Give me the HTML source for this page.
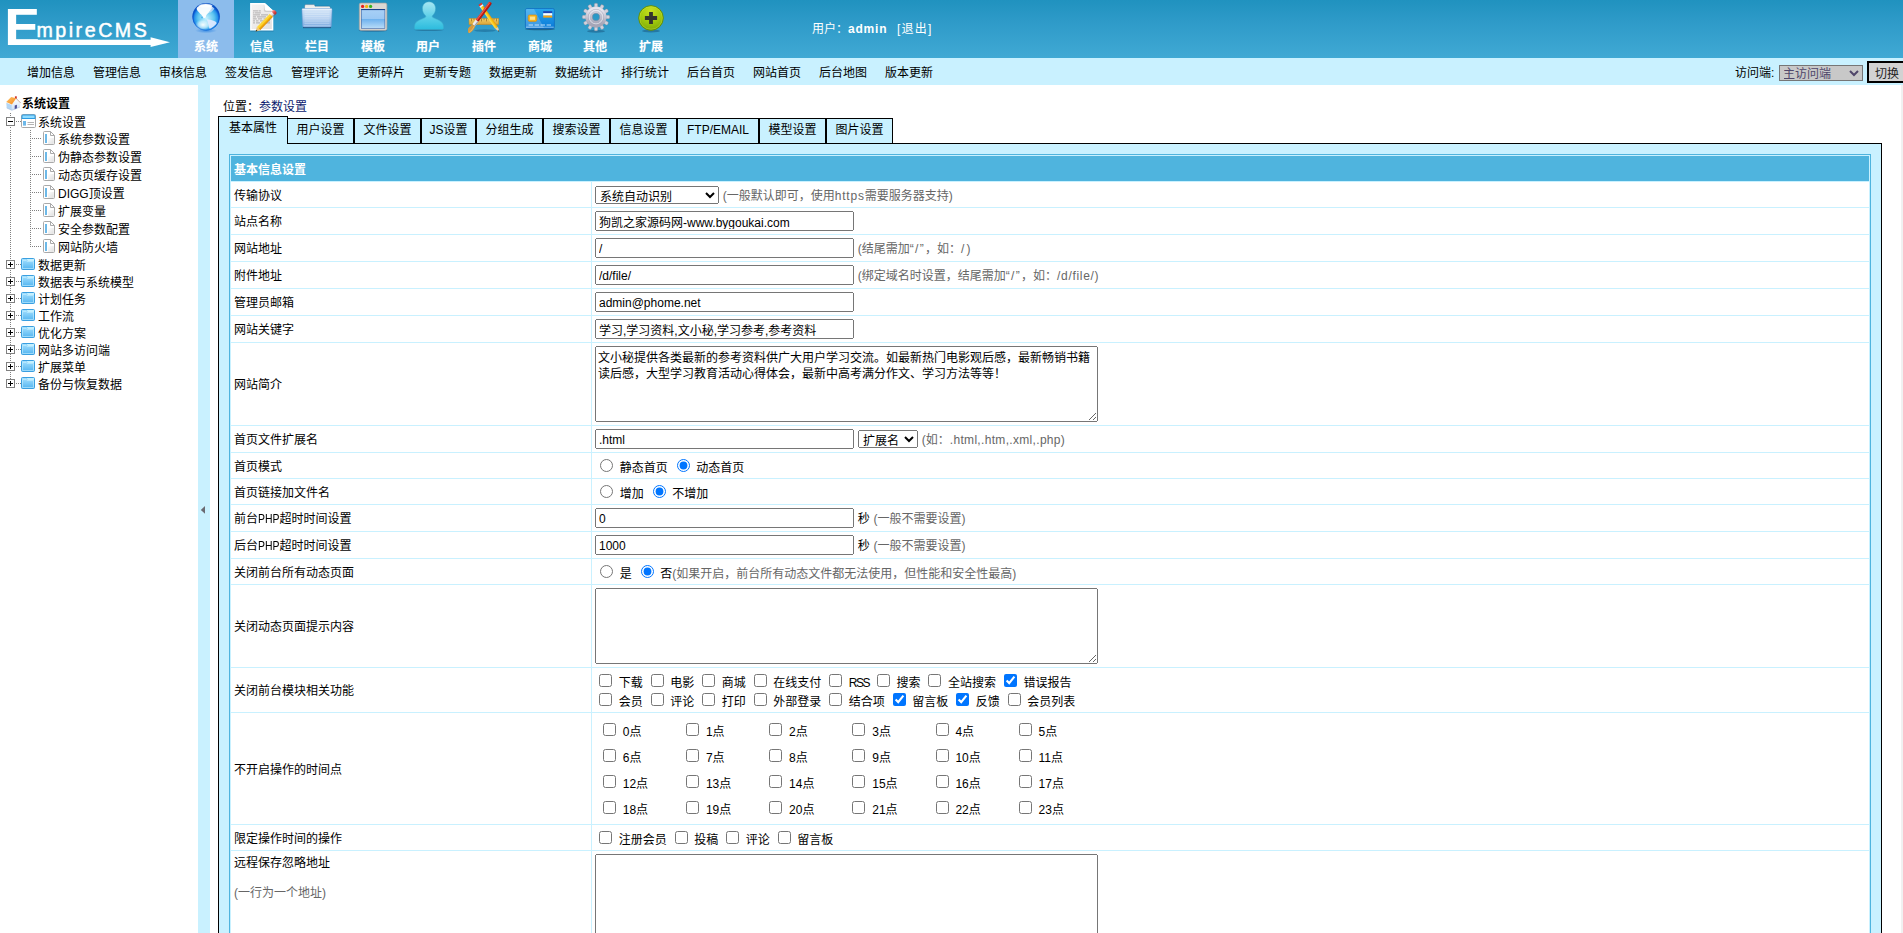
<!DOCTYPE html>
<html lang="zh-CN">
<head>
<meta charset="utf-8">
<title>EmpireCMS</title>
<style>
html,body{margin:0;padding:0;}
body{width:1903px;height:933px;overflow:hidden;position:relative;background:#fff;
  font-family:"Liberation Sans","Noto Sans CJK SC",sans-serif;font-size:12px;color:#000;line-height:15px;}
a{color:inherit;text-decoration:none;}
#top{position:absolute;left:0;top:0;width:1903px;height:58px;background:linear-gradient(#2092bf 0%,#2f9bc9 40%,#40a9d4 100%);}
#logoE{position:absolute;left:5px;top:.7px;font-family:"Liberation Sans",sans-serif;font-weight:bold;font-size:52.3px;line-height:52.3px;color:#fff;}
#logoT{position:absolute;left:36.4px;top:18.4px;font-family:"Liberation Sans",sans-serif;font-size:19.6px;line-height:24px;letter-spacing:2.55px;color:#fff;white-space:nowrap;-webkit-text-stroke:.5px #fff;}
#logoA{position:absolute;left:0;top:0;}
.nav{position:absolute;top:0;height:58px;width:56px;text-align:center;color:#fff;font-weight:bold;font-size:12px;}
.nav.on{background:#8cbcec;}
.nav svg{position:absolute;left:12px;top:1px;}
.nav span{position:absolute;left:0;width:100%;top:39px;line-height:16px;text-shadow:0 0 1px rgba(255,255,255,.35);}
#user span,#user b{position:absolute;top:21px;color:#fff;line-height:16px;white-space:nowrap;}
#sub{position:absolute;left:0;top:58px;width:1903px;height:27px;background:#c9f1ff;}
#sub a{position:absolute;top:7px;line-height:16px;white-space:nowrap;}
#left{position:absolute;left:0;top:85px;width:198px;height:848px;background:#fff;}
#split{position:absolute;left:198px;top:85px;width:12px;height:848px;background:#c9f1ff;}
#main{position:absolute;left:210px;top:85px;width:1693px;height:848px;background:#fff;overflow:hidden;}
#sbar{position:absolute;left:1901px;top:85px;width:2px;height:848px;background:#f1f1f1;}
#fwd{position:absolute;left:1735px;top:7px;line-height:16px;white-space:nowrap;}
#fsel{position:absolute;left:1779px;top:7px;width:84px;height:16px;font:12px/14px "Liberation Sans","Noto Sans CJK SC",sans-serif;background:#c8c8c8;color:#4f466a;border:1px solid #767676;border-radius:0;padding:0;margin:0;text-indent:-1px;}
#fbtn{position:absolute;left:1867px;top:3px;width:60px;height:22px;font:12px/14px "Liberation Sans","Noto Sans CJK SC",sans-serif;background:#d2d2d2;color:#222;border:2px solid #000;border-radius:0;padding:3px 0 0 6px;margin:0;text-align:left;}
.tl{position:absolute;line-height:16px;white-space:nowrap;margin-top:1px;}
#pos{position:absolute;left:13px;top:14px;line-height:16px;white-space:nowrap;}
#pos a{color:#0b1a6e;}
.tab{position:absolute;top:33px;height:26px;box-sizing:border-box;border:1px solid #000;border-bottom:none;background:#c9f1ff;text-align:center;line-height:16px;padding-top:3px;white-space:nowrap;z-index:1;}
.tab.sel{top:31px;height:28px;z-index:3;padding-top:3px;}
#pane{position:absolute;left:8px;top:58px;width:1664px;height:900px;box-sizing:border-box;border:1px solid #000;background:#c9f1ff;z-index:2;}
#tb{position:absolute;left:10px;top:10px;width:1642px;box-sizing:border-box;border:1px solid #4fb4de;background:#c9f1ff;border-spacing:1px;border-collapse:separate;table-layout:fixed;}
#tb td{background:#fff;padding:0 3px;box-sizing:border-box;vertical-align:middle;white-space:nowrap;word-spacing:.42px;}
#tb td.hd{background:#4fb4de;color:#fff;font-weight:bold;}
#tb td.c1{width:360px;}
.g{color:#666;}
input[type=text],textarea,select{font:12px "Liberation Sans","Noto Sans CJK SC",sans-serif;margin:0;box-sizing:border-box;vertical-align:middle;}
input[type=text]{width:259px;height:20px;padding:1px 2px;}
textarea{width:503px;height:76px;line-height:16px;padding:3px 2px 1px 2px;display:block;overflow:hidden;white-space:pre;}
select.s1{width:124px;height:18px;}
select.s2{width:60px;height:18px;}
input[type=checkbox]{margin:3px 3px 3px 4px;vertical-align:middle;width:13px;height:13px;}
input[type=radio]{margin:3px 3px 3px 5px;vertical-align:middle;width:13px;height:13px;}
#tp{border-spacing:1px;border-collapse:separate;width:500px;table-layout:fixed;}
#tp td{height:25px;padding:0 3px;}
#tb td{line-height:16px;}
.t{position:relative;top:1px;}
.t.h{top:2px;}
.t.r{top:3px;}
.t.k{top:3px;}
select.s1{position:relative;top:.5px;}
select.s2{margin-left:.24px;}
i{font-style:normal;}
.l2{display:inline-block;transform:scaleX(.87);transform-origin:0 50%;margin-right:-3.2px;}
.l3{letter-spacing:-1.5px;}
select.s1,select.s2{padding-top:2px;padding-bottom:0;}
.t.top{top:2px;}
.q{letter-spacing:1.3px;}
.sl{letter-spacing:2.2px;}
.sm{letter-spacing:.69px;}
.l1{letter-spacing:.8px;}
.l4{letter-spacing:.32px;}
input.la{padding:2px 2px 0 2px;}
</style>
</head>
<body>
<div id="top">
  <svg id="logoA" width="180" height="58" viewBox="0 0 180 58"><path d="M7.9 9H16.1V39.7H150.6V37.3L170 42.3L150.6 47.1V44.9H7.9Z" fill="#fff"/></svg>
  <div id="logoE">E</div>
  <div id="logoT">mpireCMS</div>
  <div class="nav on" style="left:178px"><svg width="32" height="32" viewBox="0 0 32 32">
    <defs>
      <radialGradient id="g1" cx="0.5" cy="0.56" r="0.5"><stop offset="0" stop-color="#c8f2ff"/><stop offset="0.6" stop-color="#5cc4f0"/><stop offset="0.84" stop-color="#2894ea"/><stop offset="0.95" stop-color="#0c5ed4"/><stop offset="1" stop-color="#0a50c4"/></radialGradient>
      <radialGradient id="g1b" cx="0.5" cy="0.5" r="0.5"><stop offset="0" stop-color="#ffffff" stop-opacity=".95"/><stop offset="0.6" stop-color="#e4f8ff" stop-opacity=".6"/><stop offset="1" stop-color="#bfeeff" stop-opacity="0"/></radialGradient>
      <radialGradient id="g1s" cx="0.5" cy="0.5" r="0.5"><stop offset="0" stop-color="#1c7ae0" stop-opacity=".7"/><stop offset="1" stop-color="#1c7ae0" stop-opacity="0"/></radialGradient>
      <filter id="bl1" x="-10%" y="-10%" width="120%" height="120%"><feGaussianBlur stdDeviation=".45"/></filter>
      <clipPath id="c1"><circle cx="16.1" cy="15.8" r="13.7"/></clipPath>
    </defs>
    <ellipse cx="16" cy="29.6" rx="11" ry="2.6" fill="url(#g1s)"/>
    <circle cx="16.1" cy="15.8" r="13.7" fill="url(#g1)"/>
    <g clip-path="url(#c1)">
      <ellipse cx="13" cy="23.800" rx="8" ry="5.600" fill="url(#g1b)"/>
      <g filter="url(#bl1)">
      <path d="M6.600 7.500C7.500 4.500 12 3 15 3.200C18.500 3.200 21.500 4.400 22.400 6.200C22.200 8 20.600 9 19.600 10.600C18.600 12 17.400 12.600 16.600 13.800C15.800 15 16.200 16 15.200 16.900C14.200 17.400 13.200 16.600 12.600 15.400C11.800 13.800 10.600 13.400 9.600 12C8.600 10.600 6.600 9.400 6.600 7.500Z" fill="#fff" opacity=".95"/>
      <path d="M21.500 5L24.400 7.400C23.600 9.200 21.600 10.800 19.200 12Z" fill="#d4e2f6" opacity=".75"/>
      <path d="M16.800 18.300C19.500 18.300 23 19.300 25.300 20.600C26.400 21.200 26.800 22 26.400 22.800C25 24.600 22.400 26.600 19.800 27.800C19 27 18.800 25.200 18.400 23.600C18 21.800 17.200 20 16.800 18.300Z" fill="#e2eaff" opacity=".92"/>
      </g>
      <ellipse cx="15.500" cy="4.600" rx="7" ry="2" fill="#fff" opacity=".8"/>
      <circle cx="12" cy="16.400" r="1" fill="#48b4ea" opacity=".9"/>
    </g>
    <circle cx="16.1" cy="15.8" r="13.4" fill="none" stroke="#0a56cc" stroke-width=".7" opacity=".55"/>
  </svg><span>系统</span></div>
  <div class="nav" style="left:234px"><svg width="32" height="32" viewBox="0 0 32 32">
    <defs><linearGradient id="g2" x1="0" y1="0" x2="1" y2="1"><stop offset="0" stop-color="#f6f4f4"/><stop offset="1" stop-color="#e2e0e0"/></linearGradient>
    <linearGradient id="g2p" x1="0" y1="0" x2="0" y2="1"><stop offset="0" stop-color="#ffe25a"/><stop offset="0.45" stop-color="#fcc414"/><stop offset="1" stop-color="#e08a04"/></linearGradient>
    <linearGradient id="g2e" x1="0" y1="0" x2="0" y2="1"><stop offset="0" stop-color="#f7a4a0"/><stop offset="0.5" stop-color="#dc4a48"/><stop offset="1" stop-color="#b42a2a"/></linearGradient>
    <linearGradient id="g2f" x1="0" y1="0" x2="0" y2="1"><stop offset="0" stop-color="#ffffff"/><stop offset="0.6" stop-color="#d8d8dc"/><stop offset="1" stop-color="#6a6a70"/></linearGradient></defs>
    <path d="M4.400 30H27.600" stroke="#1a5a88" stroke-width="1" opacity=".45"/>
    <path d="M4.100 2.100H18.800L27.300 9.800V29.500H4.100Z" fill="#fff"/>
    <path d="M5.500 3.500H18.200L25.900 10.400V28.100H5.500Z" fill="url(#g2)"/>
    <path d="M18.800 2.100L27.300 9.800H20.600C19.500 9.800 18.800 9.200 18.800 8.100Z" fill="#fff"/>
    <path d="M18.800 8.100C18.800 9.200 19.500 9.800 20.600 9.800H27.300L25.900 10.900H19.600C18.600 10.900 17.900 10.200 17.900 9.200V3.500Z" fill="#b8b6b6" opacity=".55"/>
    <g stroke="#8a8888" stroke-width=".9" opacity=".7"><path d="M7 9.900H12.400M12.900 9.900H14.800M7 11.900H8.400M8.900 11.900H14.800M7 13.900H14M15 13.900H22M7 15.900H10M11 15.900H20M7 17.900H10.800M12 17.900H16.200M17.500 17.900H24M7 19.900H9M10 19.900H12.500M14 19.900H24M7 21.900H9M10 21.900H14M15 21.900H24"/></g>
    <g transform="translate(9.700 30.400) rotate(-45.800)">
      <path d="M4 -2.300H22.500V2.300H4Z" fill="url(#g2p)"/>
      <path d="M4 -0.700H22.500" stroke="#ffd838" stroke-width="1.100" opacity=".9"/>
      <path d="M0 0L4 -2.300V2.300Z" fill="#f0c878"/>
      <path d="M0 0L1.500 -0.860V0.860Z" fill="#1a1a1a"/>
      <path d="M22.500 -2.300H25.200V2.300H22.500Z" fill="url(#g2f)"/>
      <path d="M25.200 -2.400H27C28 -2.400 28.600 -1.400 28.600 0C28.600 1.400 28 2.400 27 2.400H25.200Z" fill="url(#g2e)"/>
    </g>
  </svg><span>信息</span></div>
  <div class="nav" style="left:289px"><svg width="32" height="32" viewBox="0 0 32 32">
    <defs><linearGradient id="g3" x1="0" y1="0" x2="0" y2="1"><stop offset="0" stop-color="#cfe2f7"/><stop offset="0.5" stop-color="#b4d0f0"/><stop offset="1" stop-color="#78a8e0"/></linearGradient></defs>
    <path d="M2 26.500H30" stroke="#103a66" stroke-width="1.300" opacity=".8"/>
    <path d="M3.600 5.400C3.600 4.200 4.200 3.600 5.200 3.600H12.600C13.400 3.600 13.800 4.200 14 5.200H27.800C28.800 5.200 29.400 5.800 29.400 6.800V10H3.600Z" fill="#efeeec" stroke="#14406c" stroke-width=".5" stroke-opacity=".6"/>
    <path d="M4 6.900H29V10H4Z" fill="#fdfdfc"/>
    <path d="M0.900 8.800C0.900 8 1.400 7.500 2.200 7.500H29.800C30.600 7.500 31.100 8 31.100 8.800L30.400 24.800C30.400 25.600 29.900 26 29.100 26H2.900C2.100 26 1.600 25.600 1.600 24.800Z" fill="url(#g3)" stroke="#6a98d0" stroke-width=".6"/>
    <g stroke="#fff" stroke-width=".6" opacity=".5"><path d="M3.500 10H28.500M3.500 11.800H28.500M3.500 13.600H28.500M3.500 15.400H28.500M3.500 17.200H28.500M3.500 19H28.500M3.500 20.800H28.500M3.500 22.600H28.500"/></g>
    <path d="M1.300 8.300H30.700" stroke="#f2f8fe" stroke-width=".9"/>
    <path d="M2.600 24.900H29.400" stroke="#e4effb" stroke-width=".7" opacity=".8"/>
  </svg><span>栏目</span></div>
  <div class="nav" style="left:345px"><svg width="32" height="32" viewBox="0 0 32 32">
    <defs><linearGradient id="g4" x1="0" y1="0" x2="0" y2="1"><stop offset="0" stop-color="#a8d0f6"/><stop offset="0.5" stop-color="#9ac8f4"/><stop offset="0.52" stop-color="#6fb2ee"/><stop offset="1" stop-color="#b9dcf8"/></linearGradient></defs>
    <ellipse cx="16" cy="29.6" rx="14.4" ry="1.2" fill="#1c4b78" opacity=".5"/>
    <rect x="2.3" y="2.1" width="27.6" height="27.2" rx="1.6" fill="#dcd8d3" stroke="#a8a4a0" stroke-width=".7"/>
    <rect x="4.3" y="8.4" width="23.6" height="19" fill="url(#g4)" stroke="#1f4f9c" stroke-width=".5"/>
    <path d="M4.3 8.6H27.9" stroke="#123a86" stroke-width="1"/>
    <circle cx="5.6" cy="5.4" r="1.6" fill="#e8201a"/><circle cx="9.6" cy="5.4" r="1.6" fill="#f2b60c"/><circle cx="13.6" cy="5.4" r="1.6" fill="#39b218"/>
  </svg><span>模板</span></div>
  <div class="nav" style="left:400px"><svg width="32" height="32" viewBox="0 0 32 32">
    <defs><linearGradient id="g5" x1="0" y1="0" x2="0" y2="1"><stop offset="0" stop-color="#a8e6f2"/><stop offset="0.55" stop-color="#5cd0e8"/><stop offset="1" stop-color="#2cbcde"/></linearGradient></defs>
    <ellipse cx="17" cy="28.8" rx="14.6" ry="1.2" fill="#1a5a80" opacity=".5"/>
    <path d="M17 0.8C21 0.8 23.6 3.8 23.6 7.6C23.6 10.8 22.2 13.2 20.6 14.6C20 15.2 20.2 16.2 21 16.6C24.4 18.2 29.4 19.8 30.8 22.6C31.6 24.2 31.8 26 31.6 27.4C31.5 28.1 31 28.5 30.2 28.5H3.8C3 28.5 2.5 28.1 2.4 27.4C2.2 26 2.4 24.2 3.2 22.6C4.6 19.8 9.6 18.2 13 16.6C13.8 16.2 14 15.2 13.4 14.6C11.8 13.2 10.4 10.8 10.4 7.6C10.4 3.8 13 0.8 17 0.8Z" fill="url(#g5)" stroke="#3aa6c6" stroke-width=".5"/>
  </svg><span>用户</span></div>
  <div class="nav" style="left:456px"><svg width="32" height="32" viewBox="0 0 32 32">
    <defs>
    <linearGradient id="g6r" x1="0" y1="0" x2="0" y2="1"><stop offset="0" stop-color="#f2cf6a"/><stop offset="1" stop-color="#d9a234"/></linearGradient>
    <linearGradient id="g6p" x1="0" y1="0" x2="0" y2="1"><stop offset="0" stop-color="#e89a04"/><stop offset="0.5" stop-color="#fcc818"/><stop offset="1" stop-color="#ffe15a"/></linearGradient>
    <linearGradient id="g6b" x1="0" y1="0" x2="0" y2="1"><stop offset="0" stop-color="#ac100a"/><stop offset="0.55" stop-color="#cc2016"/><stop offset="1" stop-color="#e84a3c"/></linearGradient>
    </defs>
    <ellipse cx="17" cy="29.600" rx="11" ry="1.300" fill="#12507a" opacity=".4"/>
    <rect x="1" y="17.400" width="29.800" height="6.300" fill="url(#g6r)" stroke="#b8862a" stroke-width=".5"/>
    <g stroke="#94691a" stroke-width=".7"><path d="M3.500 17.600V20.400M6 17.600V19.200M8.500 17.600V20.400M11 17.600V19.200M13.500 17.600V20.400M16 17.600V19.200M18.500 17.600V20.400M21 17.600V19.200M23.500 17.600V20.400M26 17.600V19.200M28.500 17.600V20.400"/></g>
    <g transform="translate(12.100 3) rotate(55.400)">
      <path d="M3 -1.750H29V1.750H3Z" fill="url(#g6p)"/>
      <path d="M-0.300 -1.600C-0.300 -1.900 0 -1.900 0.300 -1.900H1.600V1.900H0.300C0 1.900 -0.300 1.900 -0.300 1.600Z" fill="#e0362e"/>
      <path d="M1.600 -1.900H3.200V1.900H1.600Z" fill="#f4f4f6"/>
      <path d="M29 -1.750L33.800 0L29 1.750Z" fill="#f2d2a0"/>
      <path d="M32.300 -0.550L33.900 0L32.300 0.550Z" fill="#111"/>
    </g>
    <g transform="translate(22.700 1.300) rotate(126.500)">
      <path d="M0.800 -1.700H23V1.700H0.800C-0.300 1.700 -0.300 -1.700 0.800 -1.700Z" fill="url(#g6b)"/>
      <path d="M1 0.500H23" stroke="#f8988a" stroke-width=".6" opacity=".8"/>
      <path d="M23 -1.800H28.500V1.800H23Z" fill="#ececf0"/>
      <path d="M23 -1.800H28.500V-0.600H23Z" fill="#9a9aa2"/>
      <path d="M28.500 -1.800C31 -2.800 34 -2.600 37.500 -1.400C38 0.800 37 2.200 35.500 2.400C33 2.800 30.600 2.400 28.500 1.800Z" fill="#d69a3e"/>
      <path d="M29 -1C32 -1.600 34.500 -1.400 37 -0.600" stroke="#f0c070" stroke-width=".7" fill="none"/>
    </g>
  </svg><span>插件</span></div>
  <div class="nav" style="left:512px"><svg width="32" height="32" viewBox="0 0 32 32">
    <defs><linearGradient id="g7" x1="0" y1="0" x2="0" y2="1"><stop offset="0" stop-color="#2aa6ee"/><stop offset="1" stop-color="#0a7ad8"/></linearGradient></defs>
    <ellipse cx="16" cy="28" rx="15" ry="1.3" fill="#153f66" opacity=".6"/>
    <rect x="1.4" y="7.5" width="29" height="20" rx="1.8" fill="url(#g7)" stroke="#0a62b8" stroke-width=".6"/>
    <path d="M1.800 8H10L20 27H1.800Z" fill="#fff" opacity=".2"/><path d="M2 26.200H29.800" stroke="#dff1ff" stroke-width=".8" opacity=".7"/>
    <rect x="4.2" y="14" width="8.600" height="6.400" rx="1.4" fill="#f6b41e" stroke="#d98c08" stroke-width=".6"/>
    <rect x="6" y="15.600" width="5" height="3.200" fill="#ffe18a"/>
    <rect x="19.200" y="10.200" width="9" height="2" fill="#1b45b4"/><rect x="19.200" y="12.200" width="9" height="2.400" fill="#fff"/><rect x="19.200" y="14.600" width="9" height="2" fill="#f7a414"/>
    <g stroke="#d6ecfb" stroke-width="1.2" opacity=".9"><path d="M4.600 24H9M10.600 24H15M16.600 24H21M22.600 24H27"/></g>
  </svg><span>商城</span></div>
  <div class="nav" style="left:567px"><svg width="32" height="32" viewBox="0 0 32 32">
    <defs><linearGradient id="g8" x1="0" y1="0" x2="0" y2="1"><stop offset="0" stop-color="#e4e4ee"/><stop offset="1" stop-color="#a6a6b8"/></linearGradient>
    <linearGradient id="g8t" x1="0" y1="0" x2="0" y2="1"><stop offset="0" stop-color="#f0f0f6"/><stop offset="1" stop-color="#c4c4d2"/></linearGradient></defs>
    <ellipse cx="17" cy="30.200" rx="9" ry="1.500" fill="#124a74" opacity=".45"/>
    <g transform="translate(17 16)" fill="#d2d2de" stroke="#8e8a92" stroke-width=".35">
      <g id="tooth"><path d="M-1.650 -9.500V-12.900Q-1.650 -13.800 0 -13.800Q1.650 -13.800 1.650 -12.900V-9.500Z"/></g>
      <use href="#tooth" transform="rotate(30)"/><use href="#tooth" transform="rotate(60)"/><use href="#tooth" transform="rotate(90)"/><use href="#tooth" transform="rotate(120)"/><use href="#tooth" transform="rotate(150)"/><use href="#tooth" transform="rotate(180)"/><use href="#tooth" transform="rotate(210)"/><use href="#tooth" transform="rotate(240)"/><use href="#tooth" transform="rotate(270)"/><use href="#tooth" transform="rotate(300)"/><use href="#tooth" transform="rotate(330)"/>
    </g>
    <circle cx="17" cy="16" r="7.150" fill="none" stroke="url(#g8)" stroke-width="6.900"/>
    <circle cx="17" cy="16" r="10.500" fill="none" stroke="#8e8a92" stroke-width=".3" opacity=".5"/>
    <circle cx="17" cy="16" r="7.600" fill="none" stroke="#9c9cae" stroke-width=".6"/>
    <circle cx="17" cy="16" r="6.900" fill="none" stroke="#eeeef4" stroke-width=".7"/>
    <circle cx="17" cy="16" r="5.300" fill="none" stroke="#a8a8b8" stroke-width=".5"/>
    <circle cx="17" cy="16" r="3.800" fill="none" stroke="#8a8a9a" stroke-width=".6"/>
  </svg><span>其他</span></div>
  <div class="nav" style="left:623px"><svg width="32" height="32" viewBox="0 0 32 32">
    <defs><radialGradient id="g9" cx="0.5" cy="0.2" r="0.85"><stop offset="0" stop-color="#c8e020"/><stop offset="0.55" stop-color="#a0c80c"/><stop offset="1" stop-color="#7aa608"/></radialGradient></defs>
    <ellipse cx="16" cy="30" rx="9" ry="1.400" fill="#124a74" opacity=".45"/>
    <circle cx="16" cy="16.950" r="12.300" fill="url(#g9)" stroke="#5e8e0a" stroke-width="1"/>
    <circle cx="16" cy="16.950" r="11.300" fill="none" stroke="#d4ea50" stroke-width=".6" opacity=".55"/>
    <path d="M14.100 10.900H17.900V15.100H22.100V18.900H17.900V23.100H14.100V18.900H9.900V15.100H14.100Z" fill="#34342e"/>
  </svg><span>扩展</span></div>
  <div id="user"><span style="left:812px">用户：</span><b style="left:848px;letter-spacing:.8px">admin</b><span style="left:897px;letter-spacing:1.2px">[退出]</span></div>
</div>
<div id="sub">
  <a style="left:27px">增加信息</a>
  <a style="left:93px">管理信息</a>
  <a style="left:159px">审核信息</a>
  <a style="left:225px">签发信息</a>
  <a style="left:291px">管理评论</a>
  <a style="left:357px">更新碎片</a>
  <a style="left:423px">更新专题</a>
  <a style="left:489px">数据更新</a>
  <a style="left:555px">数据统计</a>
  <a style="left:621px">排行统计</a>
  <a style="left:687px">后台首页</a>
  <a style="left:753px">网站首页</a>
  <a style="left:819px">后台地图</a>
  <a style="left:885px">版本更新</a>
  <span id="fwd">访问端:</span>
  <select id="fsel"><option>主访问端</option></select>
  <button id="fbtn">切换</button>
</div>
<div id="left">
  <svg width="0" height="0" style="position:absolute"><defs>
    <symbol id="i-page" viewBox="0 0 12 14"><path d="M1.5 0.5H7.500L11.500 4.500V12.500Q11.500 13.500 10.500 13.500H1.500Q0.500 13.500 0.500 12.500V1.500Q0.500 0.500 1.500 0.500Z" fill="#fff" stroke="#a9a9a9"/><path d="M7.500 0.500V4.500H11.500" fill="none" stroke="#a9a9a9"/><rect x="2" y="3" width="2" height="9" fill="#6db9e8"/><path d="M5 7H10.800V12.800H5Z" fill="url(#pgsh)"/></symbol>
    <linearGradient id="pgsh" x1="0" y1="0" x2="1" y2="1"><stop offset="0" stop-color="#fff"/><stop offset="1" stop-color="#dedede"/></linearGradient>
    <linearGradient id="fdg" x1="0" y1="0" x2="0" y2="1"><stop offset="0" stop-color="#a8e2ff"/><stop offset="1" stop-color="#52b4f0"/></linearGradient>
    <symbol id="i-fold" viewBox="0 0 14 12"><path d="M1.500 0.500H12.500Q13.500 0.500 13.500 1.500V10.500Q13.500 11.500 12.500 11.500H1.500Q0.500 11.500 0.500 10.500V1.500Q0.500 0.500 1.500 0.500Z" fill="url(#fdg)" stroke="#3a9fe0"/><path d="M1 1H5.500L6.500 3H13V1Z" fill="#6cc2f6"/><path d="M5.800 1H13V3H6.600Z" fill="#c4f0ff"/><path d="M1.500 10.500V2.500H5.200L6.200 3.500H12.500V10.500Z" fill="none" stroke="#c8f0ff" stroke-width=".8" opacity=".75"/></symbol>
    <symbol id="i-win" viewBox="0 0 15 14"><rect x="0.500" y="0.500" width="14" height="13" rx="1" fill="#fff" stroke="#a8a8a8"/><path d="M0.500 5V2Q0.500 0.500 2 0.500H13Q14.500 0.500 14.500 2V5Z" fill="#2d9be2"/><rect x="1.500" y="1.500" width="12" height="2.500" fill="#8fdcff"/><rect x="2" y="7" width="3" height="4.600" fill="#6cb8ea"/><path d="M6.500 8.500H13M6.500 10.500H13" stroke="#b4b4b4"/></symbol>
    <symbol id="i-plus" viewBox="0 0 9 9"><rect x="0.500" y="0.500" width="8" height="8" fill="#fff" stroke="#808080"/><path d="M2 4.500H7M4.500 2V7" stroke="#000"/></symbol>
    <symbol id="i-minus" viewBox="0 0 9 9"><rect x="0.500" y="0.500" width="8" height="8" fill="#fff" stroke="#808080"/><path d="M2 4.500H7" stroke="#000"/></symbol>
  </defs></svg>
  <svg width="198" height="848" style="position:absolute;left:0;top:0" shape-rendering="crispEdges"><g stroke="#808080" stroke-width="1" stroke-dasharray="1 1" fill="none"><path d="M10.5 28 V31"/><path d="M10.5 42 V43"/><path d="M10.5 45 V300"/><path d="M30.5 45 V162"/><path d="M16 36.5 H21"/><path d="M30 53.5 H41"/><path d="M30 71.5 H41"/><path d="M30 89.5 H41"/><path d="M30 107.5 H41"/><path d="M30 125.5 H41"/><path d="M30 143.5 H41"/><path d="M30 161.5 H41"/><path d="M16 179.5 H21"/><path d="M16 196.5 H21"/><path d="M16 213.5 H21"/><path d="M16 230.5 H21"/><path d="M16 247.5 H21"/><path d="M16 264.5 H21"/><path d="M16 281.5 H21"/><path d="M16 298.5 H21"/></g></svg>
  <svg style="position:absolute;left:6px;top:11px" width="15" height="15" viewBox="0 0 15 15"><defs><linearGradient id="hr" x1="0" y1="0" x2="1" y2="1"><stop offset="0" stop-color="#ffc266"/><stop offset="1" stop-color="#f58a1c"/></linearGradient><linearGradient id="hw" x1="0" y1="0" x2="0" y2="1"><stop offset="0" stop-color="#ffffff"/><stop offset="1" stop-color="#cfe0f6"/></linearGradient></defs><path d="M8.900 0.300H10.800V3H8.900Z" fill="#d0342c"/><path d="M0.300 6.700L5.900 8.900V14.300L0.700 12Z" fill="#b4d6f4"/><path d="M5.900 8.400L10.100 2.400L14.400 6.700L14 11L5.900 14.300Z" fill="url(#hw)"/><path d="M10.100 2.400L14.600 6.900" stroke="#b08a70" stroke-width=".7"/><path d="M0.200 6L5.200 1L10.200 2.300L5.900 8.600Z" fill="url(#hr)"/><path d="M8.700 9.600L10.900 8.800V12.400L8.700 13.200Z" fill="#4c4c94"/><path d="M0.700 12L5.900 14.300L14 11" fill="none" stroke="#9ab4d8" stroke-width=".5"/></svg>
  <b style="position:absolute;left:22px;top:11px;line-height:16px;white-space:nowrap">系统设置</b>
  <svg style="position:absolute;left:6px;top:32px" width="9" height="9"><use href="#i-minus"/></svg>
  <svg style="position:absolute;left:21px;top:29px" width="15" height="14"><use href="#i-win"/></svg>
  <span class="tl" style="left:38px;top:29px">系统设置</span>
  <svg style="position:absolute;left:43px;top:46px" width="12" height="14"><use href="#i-page"/></svg><span class="tl" style="left:58px;top:46px">系统参数设置</span>
  <svg style="position:absolute;left:43px;top:64px" width="12" height="14"><use href="#i-page"/></svg><span class="tl" style="left:58px;top:64px">伪静态参数设置</span>
  <svg style="position:absolute;left:43px;top:82px" width="12" height="14"><use href="#i-page"/></svg><span class="tl" style="left:58px;top:82px">动态页缓存设置</span>
  <svg style="position:absolute;left:43px;top:100px" width="12" height="14"><use href="#i-page"/></svg><span class="tl" style="left:58px;top:100px">DIGG顶设置</span>
  <svg style="position:absolute;left:43px;top:118px" width="12" height="14"><use href="#i-page"/></svg><span class="tl" style="left:58px;top:118px">扩展变量</span>
  <svg style="position:absolute;left:43px;top:136px" width="12" height="14"><use href="#i-page"/></svg><span class="tl" style="left:58px;top:136px">安全参数配置</span>
  <svg style="position:absolute;left:43px;top:154px" width="12" height="14"><use href="#i-page"/></svg><span class="tl" style="left:58px;top:154px">网站防火墙</span>
  <svg style="position:absolute;left:6px;top:175px" width="9" height="9"><use href="#i-plus"/></svg><svg style="position:absolute;left:21px;top:173px" width="14" height="12"><use href="#i-fold"/></svg><span class="tl" style="left:38px;top:172px">数据更新</span>
  <svg style="position:absolute;left:6px;top:192px" width="9" height="9"><use href="#i-plus"/></svg><svg style="position:absolute;left:21px;top:190px" width="14" height="12"><use href="#i-fold"/></svg><span class="tl" style="left:38px;top:189px">数据表与系统模型</span>
  <svg style="position:absolute;left:6px;top:209px" width="9" height="9"><use href="#i-plus"/></svg><svg style="position:absolute;left:21px;top:207px" width="14" height="12"><use href="#i-fold"/></svg><span class="tl" style="left:38px;top:206px">计划任务</span>
  <svg style="position:absolute;left:6px;top:226px" width="9" height="9"><use href="#i-plus"/></svg><svg style="position:absolute;left:21px;top:224px" width="14" height="12"><use href="#i-fold"/></svg><span class="tl" style="left:38px;top:223px">工作流</span>
  <svg style="position:absolute;left:6px;top:243px" width="9" height="9"><use href="#i-plus"/></svg><svg style="position:absolute;left:21px;top:241px" width="14" height="12"><use href="#i-fold"/></svg><span class="tl" style="left:38px;top:240px">优化方案</span>
  <svg style="position:absolute;left:6px;top:260px" width="9" height="9"><use href="#i-plus"/></svg><svg style="position:absolute;left:21px;top:258px" width="14" height="12"><use href="#i-fold"/></svg><span class="tl" style="left:38px;top:257px">网站多访问端</span>
  <svg style="position:absolute;left:6px;top:277px" width="9" height="9"><use href="#i-plus"/></svg><svg style="position:absolute;left:21px;top:275px" width="14" height="12"><use href="#i-fold"/></svg><span class="tl" style="left:38px;top:274px">扩展菜单</span>
  <svg style="position:absolute;left:6px;top:294px" width="9" height="9"><use href="#i-plus"/></svg><svg style="position:absolute;left:21px;top:292px" width="14" height="12"><use href="#i-fold"/></svg><span class="tl" style="left:38px;top:291px">备份与恢复数据</span>
</div>
<div id="split"><svg width="12" height="848" style="position:absolute;left:0;top:0"><path d="M2.8 424.9L7 421V428.8Z" fill="#6a6a72"/></svg></div>
<div id="main">
  <div id="pos">位置：<a>参数设置</a></div>
  <div class="tab sel" style="left:8px;width:70px"><span>基本属性</span></div>
  <div class="tab" style="left:77px;width:67px"><span>用户设置</span></div>
  <div class="tab" style="left:144px;width:67px"><span>文件设置</span></div>
  <div class="tab" style="left:211px;width:55px"><span>JS设置</span></div>
  <div class="tab" style="left:266px;width:67px"><span>分组生成</span></div>
  <div class="tab" style="left:333px;width:67px"><span>搜索设置</span></div>
  <div class="tab" style="left:400px;width:67px"><span>信息设置</span></div>
  <div class="tab" style="left:467px;width:82px"><span>FTP/EMAIL</span></div>
  <div class="tab" style="left:549px;width:67px"><span>模型设置</span></div>
  <div class="tab" style="left:616px;width:67px"><span>图片设置</span></div>
  <div id="pane"><table id="tb" cellspacing="1" cellpadding="0"><colgroup><col style="width:360px"><col></colgroup>
   <tr><td class="hd" colspan="2" style="height:25px"><span class="t">基本信息设置</span></td></tr>
   <tr><td class="c1 h25" style="height:25px"><span class="t">传输协议</span></td><td><select class="s1"><option>系统自动识别</option></select><span class="t g h"> (一般默认即可，使用<i class="l1">https</i>需要服务器支持)</span></td></tr>
   <tr><td class="c1 h26" style="height:26px"><span class="t">站点名称</span></td><td><input type="text" value="狗凯之家源码网-www.bygoukai.com"></td></tr>
   <tr><td class="c1 h26" style="height:26px"><span class="t">网站地址</span></td><td><input type="text" class="la" value="/"><span class="t g h"> (结尾需加<i class="q">“/”</i>，如：<i class="sl">/)</i></span></td></tr>
   <tr><td class="c1 h26" style="height:26px"><span class="t">附件地址</span></td><td><input type="text" class="la" value="/d/file/"><span class="t g h"> (绑定域名时设置，结尾需加<i class="q">“/”</i>，如：<i class="sm">/d/file/)</i></span></td></tr>
   <tr><td class="c1 h26" style="height:26px"><span class="t">管理员邮箱</span></td><td><input type="text" class="la" value="admin@phome.net"></td></tr>
   <tr><td class="c1 h26" style="height:26px"><span class="t">网站关键字</span></td><td><input type="text" value="学习,学习资料,文小秘,学习参考,参考资料"></td></tr>
   <tr><td class="c1 h82" style="height:82px"><span class="t">网站简介</span></td><td><textarea>文小秘提供各类最新的参考资料供广大用户学习交流。如最新热门电影观后感，最新畅销书籍
读后感，大型学习教育活动心得体会，最新中高考满分作文、学习方法等等！</textarea></td></tr>
   <tr><td class="c1 h26" style="height:26px"><span class="t">首页文件扩展名</span></td><td><input type="text" class="la" value=".html"><span class="t"> </span><select class="s2"><option>扩展名</option></select><span class="t g h"> (如：<i class="l4">.html,.htm,.xml,.php)</i></span></td></tr>
   <tr><td class="c1 h25" style="height:25px"><span class="t">首页模式</span></td><td><input type="radio"><span class="t r"> 静态首页 </span><input type="radio" checked><span class="t r"> 动态首页 </span></td></tr>
   <tr><td class="c1 h25" style="height:25px"><span class="t">首页链接加文件名</span></td><td><input type="radio"><span class="t r"> 增加 </span><input type="radio" checked><span class="t r"> 不增加 </span></td></tr>
   <tr><td class="c1 h26" style="height:26px"><span class="t">前台<i class="l2">PHP</i>超时时间设置</span></td><td><input type="text" class="la" value="0"><span class="t h"> 秒 </span><span class="t g h">(一般不需要设置)</span></td></tr>
   <tr><td class="c1 h26" style="height:26px"><span class="t">后台<i class="l2">PHP</i>超时时间设置</span></td><td><input type="text" class="la" value="1000"><span class="t h"> 秒 </span><span class="t g h">(一般不需要设置)</span></td></tr>
   <tr><td class="c1 h25" style="height:25px"><span class="t">关闭前台所有动态页面</span></td><td><input type="radio"><span class="t r"> 是 </span><input type="radio" checked><span class="t r"> 否</span><span class="t g r">(如果开启，前台所有动态文件都无法使用，但性能和安全性最高)</span></td></tr>
   <tr><td class="c1 h82" style="height:82px"><span class="t">关闭动态页面提示内容</span></td><td><textarea></textarea></td></tr>
   <tr><td class="c1 h44" style="height:44px"><span class="t">关闭前台模块相关功能</span></td><td><div class="ln"><input type="checkbox"><span class="t k"> 下载 </span><input type="checkbox"><span class="t k"> 电影 </span><input type="checkbox"><span class="t k"> 商城 </span><input type="checkbox"><span class="t k"> 在线支付 </span><input type="checkbox"><span class="t k"> <i class="l3">RSS</i> </span><input type="checkbox"><span class="t k"> 搜索 </span><input type="checkbox"><span class="t k"> 全站搜索 </span><input type="checkbox" checked><span class="t k"> 错误报告 </span></div><div class="ln"><input type="checkbox"><span class="t k"> 会员 </span><input type="checkbox"><span class="t k"> 评论 </span><input type="checkbox"><span class="t k"> 打印 </span><input type="checkbox"><span class="t k"> 外部登录 </span><input type="checkbox"><span class="t k"> 结合项 </span><input type="checkbox" checked><span class="t k"> 留言板 </span><input type="checkbox" checked><span class="t k"> 反馈 </span><input type="checkbox"><span class="t k"> 会员列表 </span></div></td></tr>
   <tr><td class="c1 h111" style="height:111px"><span class="t">不开启操作的时间点</span></td><td><table id="tp" cellspacing="1" cellpadding="0"><tr><td><input type="checkbox"><span class="t k"> 0点</span></td><td><input type="checkbox"><span class="t k"> 1点</span></td><td><input type="checkbox"><span class="t k"> 2点</span></td><td><input type="checkbox"><span class="t k"> 3点</span></td><td><input type="checkbox"><span class="t k"> 4点</span></td><td><input type="checkbox"><span class="t k"> 5点</span></td></tr><tr><td><input type="checkbox"><span class="t k"> 6点</span></td><td><input type="checkbox"><span class="t k"> 7点</span></td><td><input type="checkbox"><span class="t k"> 8点</span></td><td><input type="checkbox"><span class="t k"> 9点</span></td><td><input type="checkbox"><span class="t k"> 10点</span></td><td><input type="checkbox"><span class="t k"> 11点</span></td></tr><tr><td><input type="checkbox"><span class="t k"> 12点</span></td><td><input type="checkbox"><span class="t k"> 13点</span></td><td><input type="checkbox"><span class="t k"> 14点</span></td><td><input type="checkbox"><span class="t k"> 15点</span></td><td><input type="checkbox"><span class="t k"> 16点</span></td><td><input type="checkbox"><span class="t k"> 17点</span></td></tr><tr><td><input type="checkbox"><span class="t k"> 18点</span></td><td><input type="checkbox"><span class="t k"> 19点</span></td><td><input type="checkbox"><span class="t k"> 20点</span></td><td><input type="checkbox"><span class="t k"> 21点</span></td><td><input type="checkbox"><span class="t k"> 22点</span></td><td><input type="checkbox"><span class="t k"> 23点</span></td></tr></table></td></tr>
   <tr><td class="c1 h25" style="height:25px"><span class="t">限定操作时间的操作</span></td><td><input type="checkbox"><span class="t k"> 注册会员 </span><input type="checkbox"><span class="t k"> 投稿 </span><input type="checkbox"><span class="t k"> 评论 </span><input type="checkbox"><span class="t k"> 留言板 </span></td></tr>
   <tr><td class="c1" style="height:120px;vertical-align:top;padding-top:3px"><span class="t top" style="display:block;line-height:15px">远程保存忽略地址<br><br><span class="g">(一行为一个地址)</span></span></td><td style="vertical-align:top;padding-top:3px"><textarea style="height:110px"></textarea></td></tr>
  </table></div>
</div>
<div id="sbar"></div>
</body>
</html>
